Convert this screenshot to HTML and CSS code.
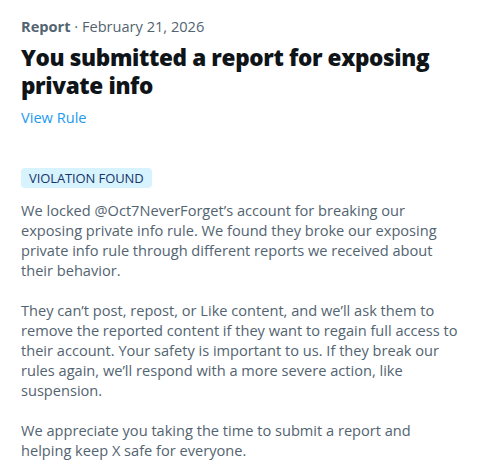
FILE: index.html
```html
<!DOCTYPE html>
<html>
<head>
<meta charset="utf-8">
<link rel="stylesheet" href="styles.css">
</head>
<body>
<main class="report">
  <div class="meta"><span class="meta-kind">Report</span> · February 21, 2026</div>
  <h1 class="title">You submitted a report for exposing private info</h1>
  <a class="rule-link" href="#">View Rule</a>
  <div class="badge-row"><span class="badge">VIOLATION FOUND</span></div>
  <p class="para">We locked @Oct7NeverForget’s account for breaking our exposing private info rule. We found they broke our exposing private info rule through different reports we received about their behavior.</p>
  <p class="para">They can’t post, repost, or Like content, and we’ll ask them to remove the reported content if they want to regain full access to their account. Your safety is important to us. If they break our rules again, we’ll respond with a more severe action, like suspension.</p>
  <p class="para">We appreciate you taking the time to submit a report and helping keep X safe for everyone.</p>
</main>
</body>
</html>
```
FILE: styles.css
```css
html, body {
  margin: 0;
  padding: 0;
  background: #ffffff;
}
body {
  font-family: "Open Sans", "Noto Sans", sans-serif;
  color: #536471;
}
.report {
  padding: 16px 21px 0 21px;
  width: 440px;
}
.meta {
  font-size: 14.6px;
  line-height: 20px;
  color: #536471;
}
.meta-kind {
  font-weight: 700;
}
.title {
  margin: 8px 0 0 0;
  font-size: 22.5px;
  line-height: 28px;
  font-weight: 800;
  letter-spacing: -0.35px;
  color: #0f1419;
}
.rule-link {
  display: inline-block;
  margin-top: 7px;
  font-size: 14.6px;
  line-height: 20px;
  color: #1d9bf0;
  text-decoration: none;
}
.badge-row {
  margin-top: 40px;
  display: flex;
}
.badge {
  background: #d6f3fe;
  color: #18346a;
  font-size: 13px;
  line-height: 20px;
  padding: 0 8px;
  letter-spacing: -0.1px;
  border-radius: 4px;
}
.para {
  margin: 12px 0 0 0;
  font-size: 14.6px;
  line-height: 20px;
  color: #536471;
}
.para + .para {
  margin-top: 20px;
}
```
